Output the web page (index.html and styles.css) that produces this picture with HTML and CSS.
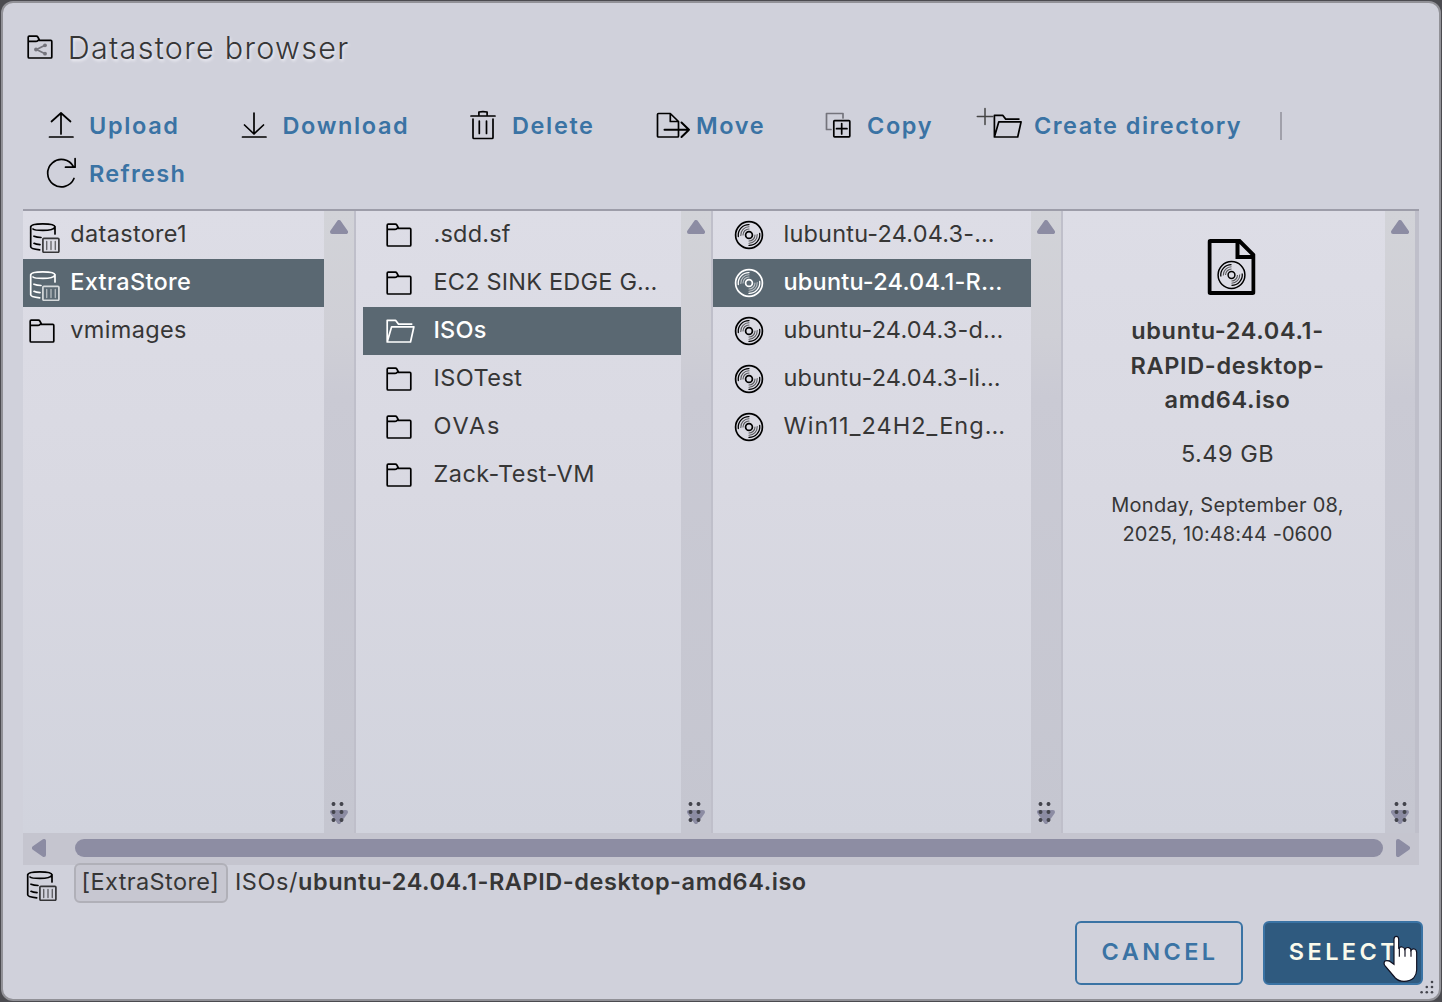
FILE: index.html
```html
<!DOCTYPE html>
<html lang="en">
<head>
<meta charset="utf-8">
<title>Datastore browser</title>
<link rel="stylesheet" href="styles.css">
</head>
<body>
<svg class="sprite" aria-hidden="true">
  <symbol id="folder" viewBox="0 0 36 36"><path d="M6.2 28V8.200q0-1 1-1h7.200q.9 0 1.400.8l1.900 3.400h11.100q1 0 1 1V28q0 1-1 1H7.200q-1 0-1-1zM6.200 12.400h7.600q1.400 0 2.100-1h2"/></symbol>
  <symbol id="folder-open" viewBox="0 0 36 36"><path d="M6.200 29V7.300h8.300l3 3.800h13.200M6.200 29l4.400-15.200h22.300L29.500 29z"/></symbol>
  <symbol id="disc" viewBox="0 0 36 36"><circle cx="18" cy="18" r="13.400"/><circle cx="18" cy="18" r="3.400"/><path stroke-width="1.300" d="M7.300 19.500A10.600 10.600 0 0 1 18 7.600M28.700 16.500A10.600 10.600 0 0 1 18 28.400"/><path stroke-width="1.100" opacity=".6" d="M9.800 18.500A8.200 8.200 0 0 1 18 9.800M26.200 17.500A8.200 8.200 0 0 1 18 26.200M12 18a6 6 0 0 1 6-6M24 18a6 6 0 0 1-6 6"/></symbol>
  <symbol id="datastore" viewBox="0 0 36 36"><path d="M6.700 9.500v20.300q0 2.200 9 3M31 9.500V17M6.700 10q0-3.200 12.100-3.200T31 10q-1.500 3.400-12.200 3.400Q10.500 13.400 9 12M10 19.200q3 1.100 7 1.300M10 26.300q2 1.100 6 1.300"/><g opacity=".75"><rect x="18.900" y="21.300" width="16" height="14" rx="1"/><path stroke-width="1.400" opacity=".7" d="M22.700 24.500v8M27 24.500v8M31.300 24.500v8"/></g></symbol>
  <symbol id="up" viewBox="0 0 18 14"><path d="M9 2 16 12H2z"/></symbol>
</svg>
<div class="dialog">
  <header class="title-bar">
    <svg class="icon" viewBox="0 0 36 36"><use href="#folder"/><g class="muted"><path d="m22.500 16.500-8 4 8 4"/><circle class="dot" cx="23" cy="16.300" r="1.900"/><circle class="dot" cx="14" cy="20.500" r="1.900"/><circle class="dot" cx="23" cy="24.700" r="1.900"/></g></svg>
    <h1>Datastore browser</h1>
  </header>
  <nav class="toolbar">
    <button class="tool t-upload"><svg class="icon" viewBox="0 0 36 36"><path d="M6.500 29h23.500M18 26V5.500M8.500 13.500 18 5l9.500 8.500"/></svg><span>Upload</span></button>
    <button class="tool t-download"><svg class="icon" viewBox="0 0 36 36"><path d="M6.500 29h23.500M18 5v20.500M8.500 17 18 26l9.500-9"/></svg><span>Download</span></button>
    <button class="tool t-delete"><svg class="icon" viewBox="0 0 36 36"><path d="M6 8h24M13.900 6.500V4q4-.8 8.200 0v2.500M8 11v18.500q0 1 1 1h18q1 0 1-1V11M14.300 13v12.500M21.500 13v12.500"/></svg><span>Delete</span></button>
    <button class="tool t-move"><svg class="icon" viewBox="0 0 36 36"><path d="M3.500 5.500h11.800l8.200 8V28q0 1-1 1h-19q-1 0-1-1V6.500q0-1 1-1zM15.300 5.500V13.500h8"/><path stroke-width="2" d="M9.500 21.700h24.500M26.500 14.500l7.500 7.200-7.500 7.300"/></svg><span>Move</span></button>
    <button class="tool t-copy"><svg class="icon" viewBox="0 0 36 36"><path class="muted" d="M22 10V5.500H5.500V21.500H10"/><rect x="12.800" y="12.700" width="16" height="16.200" rx=".8"/><path d="M15.500 20.700h10.500M20.700 15.500v10.500"/></svg><span>Copy</span></button>
    <button class="tool t-create"><svg class="icon wide" viewBox="0 0 50 36"><path class="thin" d="M2.300 8.500h15.400M10 .5v16"/><use href="#folder-open" x="13.200" width="36" height="36"/></svg><span>Create directory</span></button>
    <i class="divider"></i>
    <button class="tool t-refresh"><svg class="icon" viewBox="0 0 36 36"><path d="M31 22.500A13.700 13.700 0 1 1 30.500 10.700M32.100 2.500v8.700H22.500"/></svg><span>Refresh</span></button>
  </nav>
  <main class="browser">
    <section class="column roots">
      <ul>
        <li><svg class="icon"><use href="#datastore"/></svg><span>datastore1</span></li>
        <li class="selected"><svg class="icon"><use href="#datastore"/></svg><span>ExtraStore</span></li>
        <li><svg class="icon"><use href="#folder"/></svg><span>vmimages</span></li>
      </ul>
      <div class="scroll"><svg class="arrow"><use href="#up"/></svg><i class="grip"></i><svg class="arrow flip"><use href="#up"/></svg></div>
    </section>
    <section class="column folders">
      <ul>
        <li><svg class="icon"><use href="#folder"/></svg><span>.sdd.sf</span></li>
        <li><svg class="icon"><use href="#folder"/></svg><span>EC2 SINK EDGE G…</span></li>
        <li class="selected"><svg class="icon"><use href="#folder-open"/></svg><span>ISOs</span></li>
        <li><svg class="icon"><use href="#folder"/></svg><span class="track-s">ISOTest</span></li>
        <li><svg class="icon"><use href="#folder"/></svg><span class="track-l">OVAs</span></li>
        <li><svg class="icon"><use href="#folder"/></svg><span class="track-s">Zack-Test-VM</span></li>
      </ul>
      <div class="scroll"><svg class="arrow"><use href="#up"/></svg><i class="grip"></i><svg class="arrow flip"><use href="#up"/></svg></div>
    </section>
    <section class="column files">
      <ul>
        <li><svg class="icon"><use href="#disc"/></svg><span>lubuntu-24.04.3-…</span></li>
        <li class="selected"><svg class="icon"><use href="#disc"/></svg><span>ubuntu-24.04.1-R…</span></li>
        <li><svg class="icon"><use href="#disc"/></svg><span>ubuntu-24.04.3-d…</span></li>
        <li><svg class="icon"><use href="#disc"/></svg><span>ubuntu-24.04.3-li…</span></li>
        <li><svg class="icon"><use href="#disc"/></svg><span class="track-m">Win11_24H2_Eng…</span></li>
      </ul>
      <div class="scroll"><svg class="arrow"><use href="#up"/></svg><i class="grip"></i><svg class="arrow flip"><use href="#up"/></svg></div>
    </section>
    <section class="column detail">
      <div class="info">
        <svg class="file-icon" viewBox="0 0 48 56"><path class="page" d="M3 2h29l14 14v37q0 1-1 1H3q-1 0-1-1V3q0-1 1-1zM30 2v16h16"/><use href="#disc" x="6" y="18" width="36" height="36"/></svg>
        <p class="name">ubuntu-24.04.1-<br>RAPID-desktop-<br>amd64.iso</p>
        <p class="size">5.49 GB</p>
        <p class="date">Monday, September 08,<br><span class="time">2025, 10:48:44 -0600</span></p>
      </div>
      <div class="scroll"><svg class="arrow"><use href="#up"/></svg><i class="grip"></i><svg class="arrow flip"><use href="#up"/></svg></div>
    </section>
  </main>
  <div class="hscroll"><svg class="arrow left"><use href="#up"/></svg><i class="thumb"></i><svg class="arrow right"><use href="#up"/></svg></div>
  <div class="path">
    <svg class="icon"><use href="#datastore"/></svg>
    <span class="chip">[ExtraStore]</span>
    <span class="dir">ISOs/</span><b>ubuntu-24.04.1-RAPID-desktop-amd64.iso</b>
  </div>
  <footer>
    <button class="action">CANCEL</button>
    <button class="action primary">SELECT</button>
  </footer>
  <svg class="resize" viewBox="0 0 14 14"><circle cx="12" cy="2" r="1.300"/><circle cx="6.800" cy="7" r="1.300"/><circle cx="12" cy="7" r="1.300"/><circle cx="1.600" cy="12.300" r="1.300"/><circle cx="6.800" cy="12.300" r="1.300"/><circle cx="12" cy="12.300" r="1.300"/></svg>
  <svg class="cursor" viewBox="1148 465 105 141"><path d="M1181 478q0-9 7-9t7 9v28q3-6 10-5t8 7q5-7 12-5t7 8q4-5 10-4t7 10v53q0 13-9 24-12 10-29 10t-26-10l-32-38q-4-8 1-13 7-3 14 1l13 9z"/><path d="M1197 504v26M1214 506v24M1232 510v20"/></svg>
</div>
</body>
</html>
```

FILE: styles.css
```css
* { box-sizing: border-box; margin: 0; padding: 0; }

body {
  height: 1002px;
  padding: 1px;
  overflow: hidden;
  background: #4b4b50;
  color: #363636;
  font: 400 23.500px Inter, "Liberation Sans", sans-serif;
}

.sprite { position: absolute; width: 0; height: 0; }

svg { display: block; flex: none; }

.icon {
  width: 36px;
  height: 36px;
  overflow: visible;
  fill: none;
  stroke: #000;
  stroke-width: 1.700;
  stroke-linecap: round;
  stroke-linejoin: round;
}
.wide { width: 50px; }
.muted { stroke: #74747c; }
.dot { fill: #74747c; stroke: none; }
.thin { stroke: #444; stroke-width: 1.500; }

.dialog {
  position: relative;
  display: flex;
  flex-direction: column;
  height: 1000px;
  padding: 0 20px;
  border: 2px solid #919197;
  border-radius: 12px;
  background: #d0d1db;
}

.title-bar {
  display: flex;
  align-items: center;
  height: 92px;
  padding: 0 0 3px;
}
.title-bar .icon { margin: -2px 10px 0 -1.300px; }
h1 {
  font-size: 30.500px;
  font-weight: 300;
  letter-spacing: 1.300px;
  text-shadow: 1px 2px 3px #f0f0f6;
  white-space: nowrap;
}

.toolbar {
  display: flex;
  flex-wrap: wrap;
  align-content: flex-start;
  height: 114px;
  padding: 7px 0 0 20px;
  white-space: nowrap;
}
.tool {
  display: flex;
  align-items: center;
  gap: 10px;
  height: 48px;
  border: 0;
  background: none;
  color: #3a73a4;
  font: inherit;
  font-weight: 600;
  letter-spacing: 1.620px;
  text-align: left;
}
.t-upload { width: 193px; }
.t-download { width: 229px; gap: 10.500px; }
.t-delete { width: 190px; gap: 11px; }
.t-move { width: 166px; gap: 5px; }
.t-copy { width: 154px; }
.t-create { width: 305px; gap: 9px; letter-spacing: 1.460px; }
.t-refresh { width: 200px; letter-spacing: 1.300px; }
.divider { width: 2px; height: 28px; margin: 10px 100px 10px 0; background: #a0a0aa; }

.browser {
  display: grid;
  grid-template-columns: 333px 357px 350px 356px;
  height: 624px;
  width: 1396px;
  border-top: 2px solid #9d9da9;
  background: linear-gradient(#dddde6, #d9d9e2 45%, #d1d3dd);
}
.column { display: flex; min-width: 0; border-right: 2px solid #bfbfca; }
.detail { border-right-width: 4px; }

ul { flex: 1; min-width: 0; list-style: none; }
li {
  display: flex;
  align-items: center;
  gap: 16.500px;
  height: 48px;
  padding-left: 18px;
  letter-spacing: .2px;
  white-space: nowrap;
}
.tool span { padding-bottom: 2px; }
li span { padding-bottom: 4px; }
.roots li { gap: 10px; padding-left: 1.300px; letter-spacing: .32px; }
.folders ul { padding-left: 7px; }
.track-s { letter-spacing: .45px; }
.track-m { letter-spacing: 1.050px; }
.track-l { letter-spacing: 1.850px; }
.selected { background: #5a6872; color: #fff; font-weight: 500; }
.selected .icon { stroke: #fff; }

.scroll {
  position: relative;
  display: flex;
  flex-direction: column;
  justify-content: space-between;
  align-items: center;
  width: 30px;
  padding: 9px 0;
  background: linear-gradient(#d2d3d8, #cfcfd6 20%, #cacad4 30%, #c5c6d0);
}
.arrow {
  width: 18px;
  height: 14px;
  fill: #8c8ca3;
  stroke: #8c8ca3;
  stroke-width: 4;
  stroke-linejoin: round;
}
.flip { transform: rotate(180deg); }
.grip {
  position: absolute;
  left: 6px;
  bottom: 9px;
  z-index: 1;
  width: 16px;
  height: 24px;
  background: radial-gradient(circle at 3.500px 4px, #44454d 1.600px, transparent 2.300px) 0 0 / 8px 8px;
}
.detail .grip { left: 8px; }

.info { flex: 1; padding: 28px 0 0 7px; text-align: center; white-space: nowrap; }
.file-icon {
  width: 48px;
  height: 56px;
  margin: 0 auto 19px;
  transform: translateX(3.500px);
  fill: none;
  stroke: #000;
  stroke-width: 1.500;
}
.page { stroke-width: 4; }
.name { font-weight: 600; line-height: 34.500px; letter-spacing: .66px; }
.size { margin-top: 18px; line-height: 36px; letter-spacing: .5px; }
.date { margin-top: 19px; font-size: 20px; line-height: 29px; letter-spacing: .3px; }
.time { letter-spacing: .07px; }

.hscroll {
  display: flex;
  align-items: center;
  width: 1396px;
  height: 32px;
  padding: 0 7px 2px;
  background: #c5c5cf;
}
.left { transform: rotate(-90deg); }
.right { transform: rotate(90deg); }
.thumb { flex: 1; height: 18px; margin: 0 11px 0 27px; border-radius: 9px; background: #8d8da3; }

.path { display: flex; align-items: center; height: 40px; margin-top: -2px; white-space: nowrap; }
.path .icon { margin-left: -2px; }
.chip {
  height: 40px;
  width: 154px;
  margin: 0 7px 0 17px;
  padding: 0 5.500px;
  border: 2px solid #b0b0b8;
  border-radius: 6px;
  background: #c7c7d1;
  line-height: 33px;
  letter-spacing: .4px;
}
.dir, .path b { padding-bottom: 3px; }
.dir { letter-spacing: .55px; }
.path b { font-weight: 600; letter-spacing: .56px; }

footer { display: flex; justify-content: flex-end; gap: 20px; margin: 18px -4px 0 0; }
.action {
  width: 168px;
  height: 64px;
  padding: 0 0 4px 2px;
  border: 2px solid #3a73a4;
  border-radius: 6px;
  background: none;
  color: #3a73a4;
  font: inherit;
  font-weight: 600;
  letter-spacing: 3.400px;
}
.primary { width: 160px; background: #2f5a7f; color: #fafaeb; }

.resize { position: absolute; right: 5px; bottom: 5px; width: 14px; height: 14px; fill: #44454d; }
.cursor {
  position: absolute;
  left: 1380px;
  top: 932px;
  width: 35px;
  height: 47px;
  fill: #fff;
  stroke: #101020;
  stroke-width: 3.500;
}
```
